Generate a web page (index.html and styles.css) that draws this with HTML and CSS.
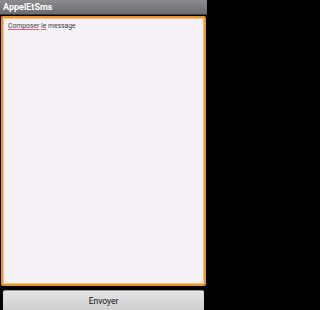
FILE: index.html
```html
<!DOCTYPE html>
<html>
<head>
<meta charset="utf-8">
<link rel="stylesheet" href="styles.css">
</head>
<body>
<div class="screen">
  <div class="titlebar">AppelEtSms</div>
  <div class="edit">
    <div class="hint"><span class="spell">Composer</span> <span class="spell">le</span> message</div>
  </div>
  <div class="btn">Envoyer</div>
</div>
</body>
</html>
```
FILE: styles.css
```css
html, body {
  margin: 0;
  padding: 0;
  background: #000;
}
* {
  box-sizing: border-box;
}
.screen {
  width: 207px;
  height: 310px;
  display: flex;
  flex-direction: column;
  font-family: "Roboto", "Liberation Sans", sans-serif;
  overflow: hidden;
}
.titlebar {
  height: 15px;
  line-height: 14px;
  background: linear-gradient(#8c8b90, #6c6b70);
  border-bottom: 1px solid #3a3a3e;
  color: #fff;
  font-weight: bold;
  font-size: 9px;
  padding-left: 3px;
  flex: none;
}
.edit {
  margin: 1px 1px 0 1px;
  height: 270px;
  flex: none;
  border: 2px solid #e8952e;
  box-shadow: inset 0 0 0 1px #f5c27a;
  border-radius: 2px;
  background: #f5f1f6;
  padding: 4px 5px;
}
.hint {
  font-size: 6.8px;
  color: #3c3b40;
  line-height: 9px;
}
.spell {
  text-decoration: underline;
  text-decoration-color: #e06070;
}
.btn {
  margin: 4px 3px 0 3px;
  flex: 1;
  background: linear-gradient(#e4e4e6, #cfcfd2);
  border-top: 1px solid #9a9a9c;
  border-radius: 2px 2px 0 0;
  text-align: center;
  font-size: 8.5px;
  color: #111;
  padding-top: 5px;
}
```
